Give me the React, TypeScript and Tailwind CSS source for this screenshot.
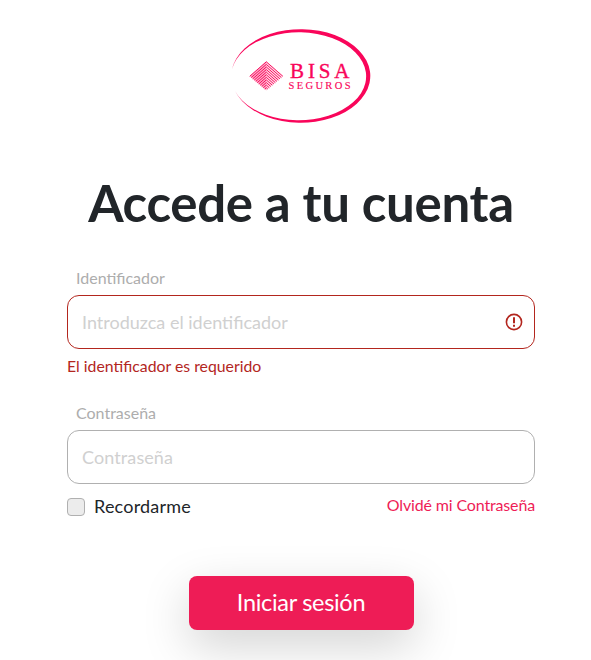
import {useState} from "react";

const inputClass =
  "block h-[54px] w-full rounded-xl border bg-white px-[14px] text-[18px] font-normal text-[#212529] outline-none placeholder:text-[#d0d0d0]";

const STEPS = 11;

const Logo = () => {
  // each stripe starts on a lower edge of the pyramid and ends on its axis
  const stripes = Array.from({length: STEPS}, (_, i) => {
    const t = i / STEPS;
    return {
      left: 29.7 + 16.6 * t,
      right: 62.9 - 16.6 * t,
      side: 56.3 + 14 * t,
      top: 41.8 + 28.5 * t,
    };
  });

  return (
    <svg width="160" height="110" viewBox="0 0 160 110" fill="#f9055a">
      <path d="M12 49.3 A69.5 46.8 0 1 1 15 71 A67.5 44 0 1 0 12 49.3 Z" />
      <path d="M29.7 56.3 L46.3 41.3 L46.3 70.5 Z" opacity="0.35" />
      <path d="M62.9 56.3 L46.3 41.3 L46.3 70.5 Z" opacity="0.15" />
      <g fill="none" stroke="#f9055a" strokeWidth="0.95">
        {stripes.map(s => (
          <path
            key={s.top}
            d={`M${s.left} ${s.side} L46.3 ${s.top} L${s.right} ${s.side}`}
          />
        ))}
      </g>
      <text
        x="70"
        y="58"
        textLength="59.5"
        stroke="#f9055a"
        strokeWidth="0.35"
        className="font-['Liberation_Serif',serif] text-[21px]"
      >
        BISA
      </text>
      <text
        x="68.5"
        y="68.8"
        textLength="62"
        stroke="#f9055a"
        strokeWidth="0.15"
        className="font-['Liberation_Serif',serif] text-[10.5px]"
      >
        SEGUROS
      </text>
    </svg>
  );
};

const Login = () => {
  const [remember, setRemember] = useState(false);

  return (
    <div className="flex h-[660px] w-[591px] flex-col overflow-hidden bg-white pr-14 pl-[67px] pt-5 font-['Lato',sans-serif] text-[#212529]">
      <div className="flex pl-[153px]">
        <Logo />
      </div>
      <h1 className="mt-[41px] text-center text-[51px] leading-[64px] font-bold tracking-[-0.3px] whitespace-nowrap">
        Accede a tu cuenta
      </h1>
      <form className="mt-[31px] flex flex-col" onSubmit={e => e.preventDefault()}>
        <label
          htmlFor="identifier"
          className="pl-[9px] text-[16px] leading-6 text-[#adadad]"
        >
          Identificador
        </label>
        <div className="relative mt-[5px]">
          <input
            id="identifier"
            type="text"
            placeholder="Introduzca el identificador"
            className={`${inputClass} border-[#b3261e]`}
          />
          <svg
            className="absolute top-[17px] right-[11px]"
            width="20"
            height="20"
            viewBox="0 0 20 20"
            fill="none"
            stroke="#b3261e"
          >
            <circle cx="10" cy="10" r="7.6" strokeWidth="1.6" />
            <path d="M10 5.2v6M10 12.8v2" strokeWidth="2" />
          </svg>
        </div>
        <span className="mt-[5px] text-[15.8px] leading-6 text-[#b3261e]">
          El identificador es requerido
        </span>
        <label
          htmlFor="password"
          className="mt-[23px] pl-[9px] text-[16px] leading-6 text-[#adadad]"
        >
          Contraseña
        </label>
        <input
          id="password"
          type="password"
          placeholder="Contraseña"
          className={`${inputClass} mt-[5px] border-[#b0b0b0] placeholder:tracking-[0.1px]`}
        />
        <div className="mt-2 flex items-start justify-between">
          <label className="flex items-center text-[18px] leading-7 tracking-[0.2px]">
            <input
              type="checkbox"
              checked={remember}
              onChange={e => setRemember(e.target.checked)}
              className="relative top-px mr-[9px] size-[18px] appearance-none rounded border border-[#b0b0b0] bg-[#ececec] checked:bg-[#ee1c56]"
            />
            Recordarme
          </label>
          <a
            href="#"
            className="mt-px text-[16px] leading-6 tracking-[-0.15px] text-[#ee1c56]"
          >
            Olvidé mi Contraseña
          </a>
        </div>
        <button
          type="submit"
          className="mt-14 h-[54px] w-[225px] self-center rounded-lg bg-[#ee1c56] text-[23.5px] tracking-[-0.3px] text-white shadow-[0_16px_48px_rgba(0,0,0,0.175)]"
        >
          Iniciar sesión
        </button>
      </form>
    </div>
  );
};

export default Login;
